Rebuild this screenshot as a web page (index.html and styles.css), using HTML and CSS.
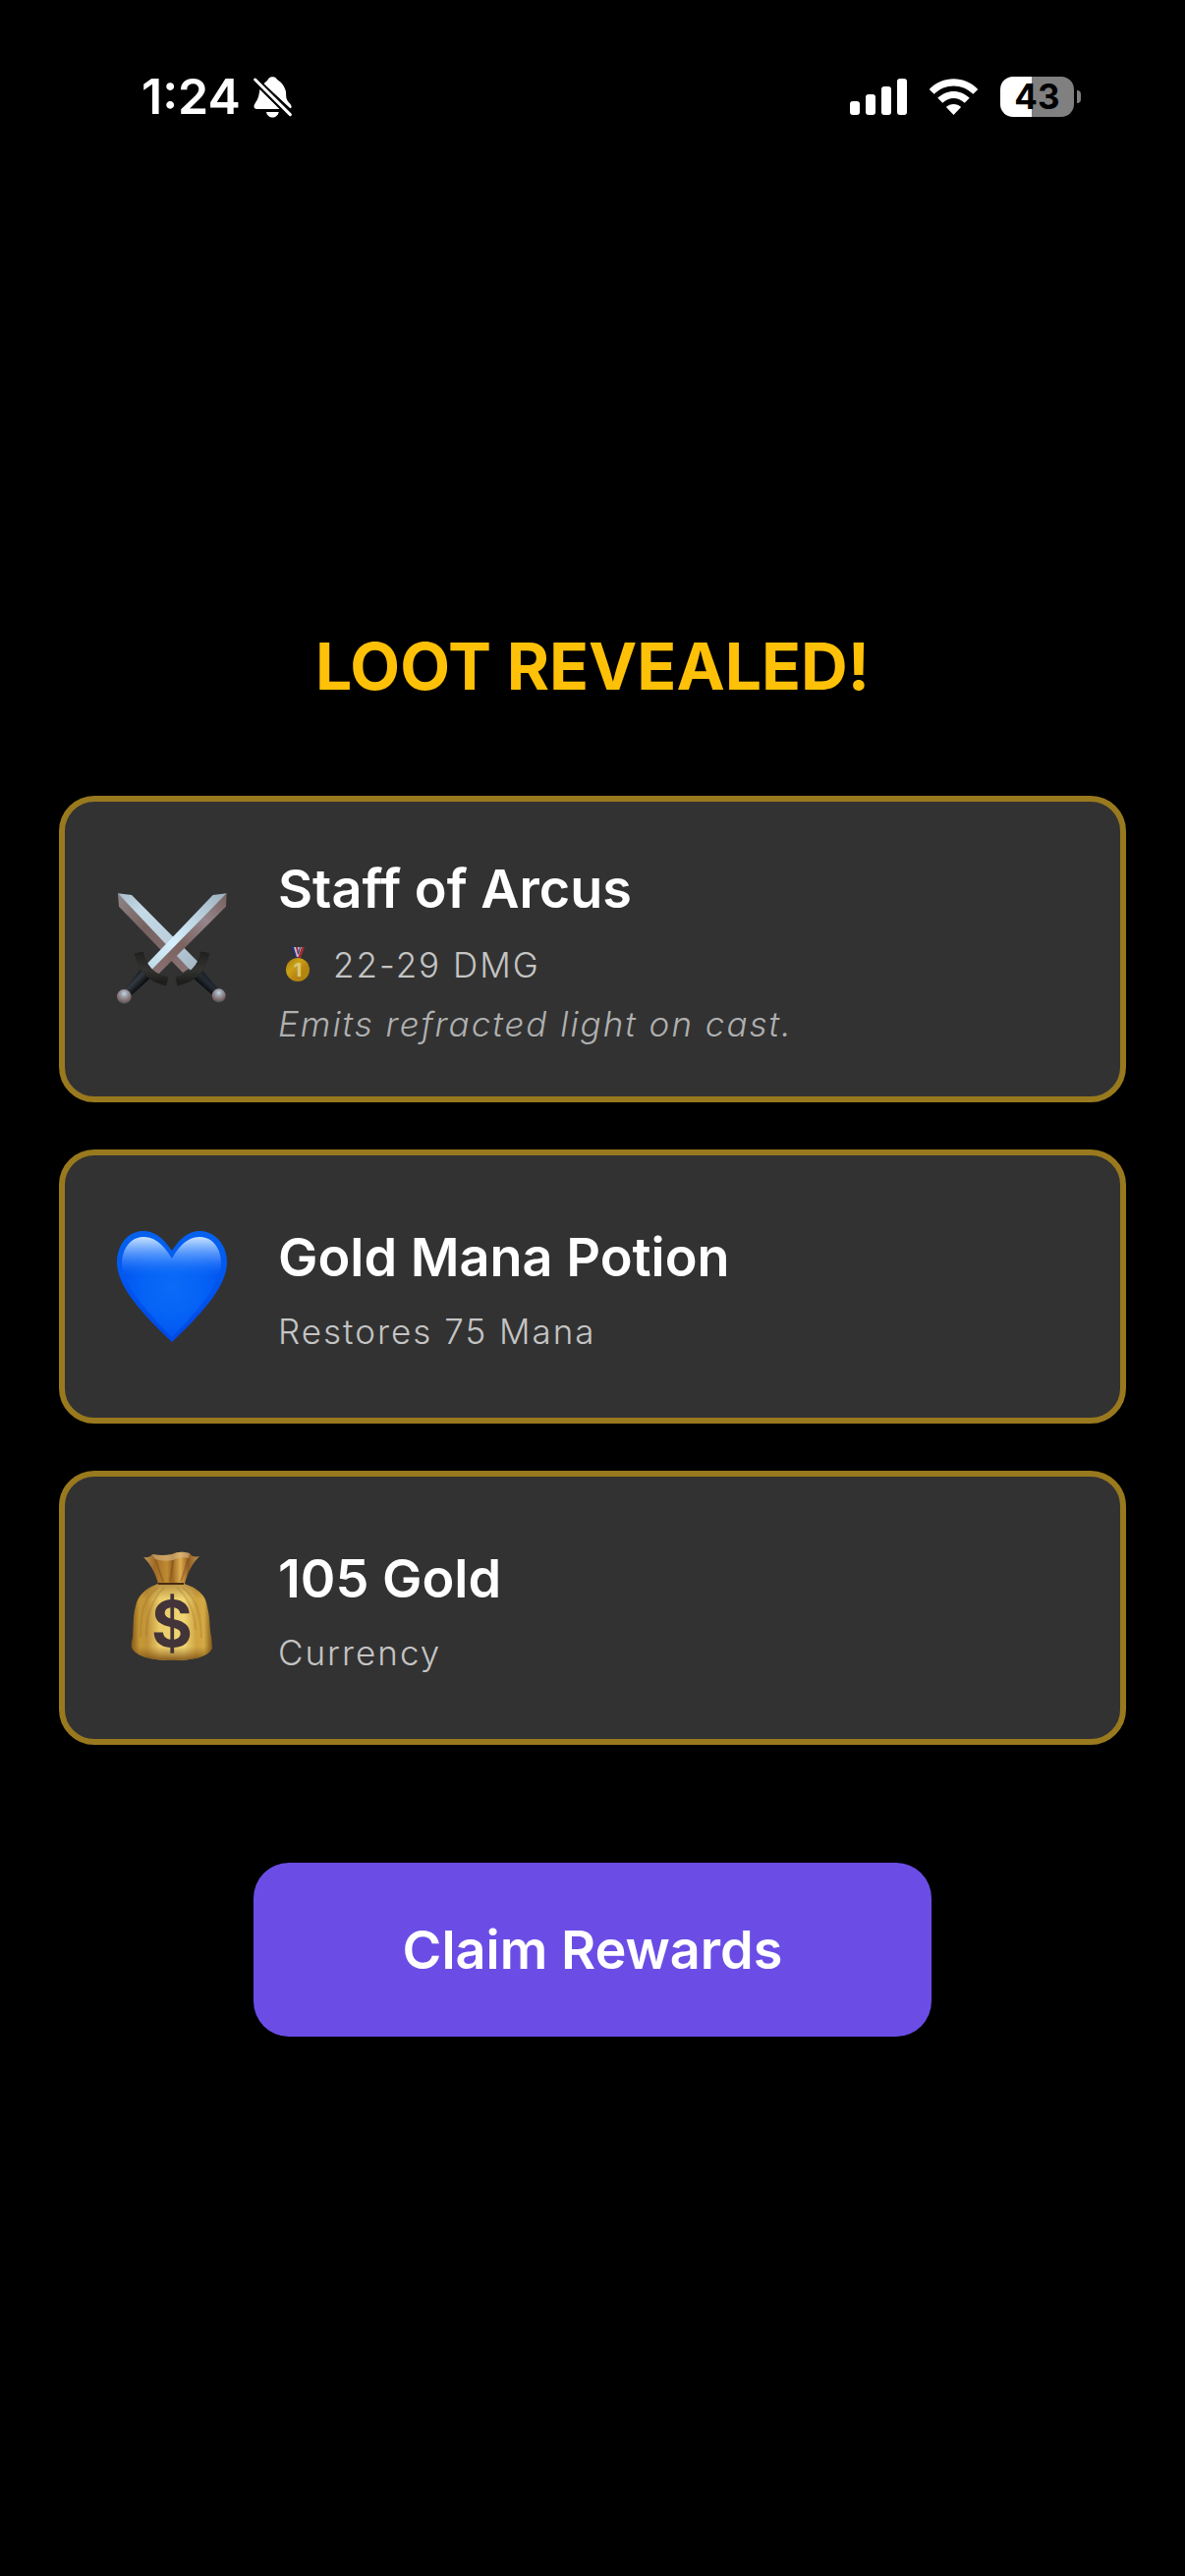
FILE: index.html
```html
<!DOCTYPE html>
<html lang="en">
<head>
<meta charset="utf-8">
<meta name="viewport" content="width=device-width, initial-scale=1">
<title>Loot Revealed</title>
<link rel="stylesheet" href="styles.css">
</head>
<body>
<header class="status">
  <div class="status-left">
    <span class="time">1:24</span>
    <svg class="bell" viewBox="0 0 117 129" aria-label="Silent mode">
      <path fill="#fff" d="M31 25C38 17 44 15 46 9C49 2 67 2 70 9C73 15 91 20 98 45C102 62 95 68 110 84C117 92 118 98 112 100L28 22Z"/>
      <path fill="#fff" d="M19 42C16 66 13 72 5 84C-2 94 2 102 10 102H80Z"/>
      <path fill="#fff" d="M39 111H77C74 133 42 133 39 111Z"/>
      <path stroke="#000" stroke-width="20" d="M5 12L111 118"/>
      <path stroke="#fff" stroke-width="9" stroke-linecap="round" d="M5 12L112 119"/>
    </svg>
  </div>
  <div class="status-right">
    <svg class="signal" viewBox="0 0 58 37" aria-label="Signal" fill="#fff">
      <rect x="0" y="23" width="10" height="14" rx="3"/>
      <rect x="16" y="16" width="10" height="21" rx="3"/>
      <rect x="32" y="8" width="10" height="29" rx="3"/>
      <rect x="48" y="0" width="10" height="37" rx="3"/>
    </svg>
    <svg class="wifi" viewBox="0 0 152 112" aria-label="Wi-Fi" fill="#fff">
      <path d="M1 33C40-10 112-10 151 33L136 48C103 14 49 14 16 48Z"/>
      <path d="M27 60C54 32 98 32 125 60L110 75C90 56 62 56 42 75Z"/>
      <path d="M53 88C65 76 87 76 99 88L76 112Z"/>
    </svg>
    <div class="battery" aria-label="Battery">43</div>
  </div>
</header>

<main class="loot">
  <h1 class="title">LOOT REVEALED!</h1>
  <ul class="cards">
    <li class="card">
      <svg class="icon" viewBox="0 6 408 408" aria-hidden="true">
        <defs>
          <linearGradient id="steel" x1="0" y1="0" x2="1" y2="1"><stop offset="0" stop-color="#a9bdca"/><stop offset=".25" stop-color="#c4dae8"/><stop offset=".6" stop-color="#bcd0dd"/><stop offset="1" stop-color="#a3b4c2"/></linearGradient>
          <linearGradient id="steelFront" x1="1" y1="0" x2="0" y2="1"><stop offset="0" stop-color="#9eafbd"/><stop offset=".35" stop-color="#bdd3e1"/><stop offset=".65" stop-color="#d6effc"/><stop offset="1" stop-color="#bed6e4"/></linearGradient>
          <linearGradient id="shade" x1="0" y1="0" x2="1" y2="1"><stop offset="0" stop-color="#8e8587"/><stop offset=".4" stop-color="#75625f"/><stop offset="1" stop-color="#8a7375"/></linearGradient>
          <linearGradient id="shadeFront" x1="1" y1="0" x2="0" y2="1"><stop offset="0" stop-color="#76605f"/><stop offset=".3" stop-color="#94858a"/><stop offset=".6" stop-color="#7b6361"/><stop offset="1" stop-color="#8b7374"/></linearGradient>
          <linearGradient id="gripL" gradientUnits="userSpaceOnUse" x1="84" y1="296" x2="112" y2="324"><stop offset="0" stop-color="#15181c"/><stop offset=".4" stop-color="#343a41"/><stop offset="1" stop-color="#0b0e12"/></linearGradient>
          <linearGradient id="gripR" gradientUnits="userSpaceOnUse" x1="326" y1="296" x2="300" y2="324"><stop offset="0" stop-color="#171c22"/><stop offset=".5" stop-color="#252c34"/><stop offset="1" stop-color="#0b0e12"/></linearGradient>
          <linearGradient id="guard" x1="0" y1="0" x2="0" y2="1"><stop offset="0" stop-color="#20201f"/><stop offset=".6" stop-color="#333331"/><stop offset="1" stop-color="#1e1e1d"/></linearGradient>
          <radialGradient id="pommel" cx=".5" cy=".3" r=".7"><stop offset="0" stop-color="#c0d3e2"/><stop offset=".35" stop-color="#9a9ba5"/><stop offset=".75" stop-color="#7d6868"/><stop offset="1" stop-color="#46505a"/></radialGradient>
        </defs>
        <path fill="url(#shade)" d="M42 40L45 80L240 282L272 262Z"/>
        <path fill="url(#steel)" d="M42 40L84 45L290 253L264 275Z"/>
        <path fill="url(#gripR)" d="M262 290L294 268L352 336L334 354Z"/>
        <path fill="none" stroke="url(#guard)" stroke-width="28" d="M308 220Q296 294 220 309"/>
        <circle cx="350" cy="352" r="21" fill="url(#pommel)"/>
        <path fill="url(#shadeFront)" d="M374 40L372 80L162 290L136 268Z"/>
        <path fill="url(#steelFront)" d="M332 45L374 40L142 276L126 260Z"/>
        <path fill="url(#gripL)" d="M112 270L146 294L78 356L60 336Z"/>
        <path fill="none" stroke="url(#guard)" stroke-width="28" d="M106 220Q120 294 193 309"/>
        <circle cx="61" cy="355" r="22" fill="url(#pommel)"/>
      </svg>
      <div class="info">
        <h2 class="name">Staff of Arcus</h2>
        <p class="detail stat">
          <svg class="medal" viewBox="0 0 40 40" aria-hidden="true">
            <defs><linearGradient id="coin" x1="0" y1="0" x2="1" y2="1"><stop offset="0" stop-color="#a9770f"/><stop offset=".35" stop-color="#c9a214"/><stop offset=".6" stop-color="#b98410"/><stop offset="1" stop-color="#a8870e"/></linearGradient></defs>
            <path fill="#292c78" d="M13 2H18L22 13H18Z"/><path fill="#c4c4cb" d="M16 2H25L21 12H19Z"/><path fill="#a32d35" d="M18 2H20L21 8L20 10ZM24 2H27L23 13H20Z"/><path fill="#292c78" d="M22 2H23L21 9H20Z"/>
            <circle cx="20" cy="25" r="12" fill="url(#coin)"/>
            <text x="20" y="32" text-anchor="middle" class="rank">1</text>
          </svg>
          <span>22-29 DMG</span>
        </p>
        <p class="detail flavor">Emits refracted light on cast.</p>
      </div>
    </li>
    <li class="card">
      <svg class="icon" viewBox="0 0 136 136" aria-hidden="true">
        <defs>
          <linearGradient id="heartRim" x1="0" y1="0" x2="0" y2="1"><stop offset="0" stop-color="#0562ee"/><stop offset=".4" stop-color="#0057f0"/><stop offset="1" stop-color="#0049e6"/></linearGradient>
          <radialGradient id="heartFill" gradientUnits="userSpaceOnUse" cx="69" cy="68" r="58"><stop offset="0" stop-color="#0b6cf7"/><stop offset=".55" stop-color="#0562f6"/><stop offset="1" stop-color="#0052ee"/></radialGradient>
          <linearGradient id="heartGloss" x1="0" y1="0" x2="0" y2="1"><stop offset="0" stop-color="#c9e4ff"/><stop offset=".12" stop-color="#9cc7ff" stop-opacity=".9"/><stop offset=".32" stop-color="#5b9cff" stop-opacity=".65"/><stop offset=".6" stop-color="#1a72fa" stop-opacity="0"/></linearGradient>
        </defs>
        <path fill="url(#heartRim)" d="M69 31C60 18 51 11 40 11C24 11 13 25 13 43C13 66 36 93 69 124C102 93 125 66 125 43C125 25 113 11 97 11C87 11 77 18 69 31Z"/>
        <path fill="url(#heartFill)" d="M69 39C60 24 51 17 40 17C27 17 18 29 18 44C18 64 40 90 69 119C98 90 119 64 119 44C119 29 111 17 97 17C87 17 77 24 69 39Z"/>
        <path fill="url(#heartGloss)" d="M69 39C60 24 51 17 40 17C27 17 18 29 18 44C18 57 26 71 38 84C58 72 80 72 99 84C111 71 119 57 119 44C119 29 111 17 97 17C87 17 77 24 69 39Z"/>
      </svg>
      <div class="info">
        <h2 class="name">Gold Mana Potion</h2>
        <p class="detail">Restores 75 Mana</p>
      </div>
    </li>
    <li class="card">
      <svg class="icon" viewBox="0 0 136 136" aria-hidden="true">
        <defs>
          <linearGradient id="sack" x1="0" y1="0" x2="1" y2="0"><stop offset="0" stop-color="#84591b"/><stop offset=".1" stop-color="#c49735"/><stop offset=".2" stop-color="#c0933a"/><stop offset=".35" stop-color="#ebcc69"/><stop offset=".65" stop-color="#f0d675"/><stop offset=".8" stop-color="#cfa441"/><stop offset=".9" stop-color="#d3aa44"/><stop offset="1" stop-color="#80571b"/></linearGradient>
          <linearGradient id="sackBase" x1="0" y1="0" x2="0" y2="1"><stop offset="0" stop-color="#8b5c1c" stop-opacity=".55"/><stop offset=".2" stop-color="#8b5c1c" stop-opacity="0"/><stop offset=".82" stop-color="#8b5c1c" stop-opacity="0"/><stop offset="1" stop-color="#74450f" stop-opacity=".85"/></linearGradient>
          <linearGradient id="ruffle" x1="0" y1="0" x2="1" y2="0"><stop offset="0" stop-color="#c19760"/><stop offset=".2" stop-color="#a06b25"/><stop offset=".42" stop-color="#c08b31"/><stop offset=".52" stop-color="#9d6924"/><stop offset=".66" stop-color="#dfac4f"/><stop offset=".8" stop-color="#935d20"/><stop offset="1" stop-color="#bd9256"/></linearGradient>
        </defs>
        <path fill="url(#ruffle)" d="M40 16Q46 17 49 13Q60 15 69 13Q77 9 87 12Q90 17 97 15C88 24 85 33 82 43H55C52 32 48 24 40 16Z"/>
        <path fill="#d8b98c" fill-opacity=".55" d="M49 13Q60 15 69 13Q77 9 87 12L86 17Q77 15 70 19Q60 21 52 18Z"/>
        <path fill="none" stroke="#744718" stroke-opacity=".4" stroke-width="2" d="M52 18L60 41M70 19L67 41M86 17L78 41"/>
        <path fill="url(#sack)" d="M55 43H81C94 47 104 54 105 67C108 77 107 87 109 97Q110 103 110 109C105 118 90 121 69 121C48 121 32 117 28 108Q27 104 29 98C30 85 29 76 32 66C34 54 44 47 55 43Z"/>
        <path fill="none" stroke="#936621" stroke-opacity=".25" stroke-width="2" d="M55 47C40 57 37 72 37 97M61 47C47 60 43 77 43 97M80 47C94 58 98 72 99 98M74 47C87 58 92 74 93 90"/>
        <path fill="url(#sackBase)" d="M55 43H81C94 47 104 54 105 67C108 77 107 87 109 97Q110 103 110 109C105 118 90 121 69 121C48 121 32 117 28 108Q27 104 29 98C30 85 29 76 32 66C34 54 44 47 55 43Z"/>
        <path stroke="#4a2b12" stroke-width="2" d="M55 43H81"/>
        <text x="69" y="107" text-anchor="middle" class="dollar">$</text>
      </svg>
      <div class="info">
        <h2 class="name">105 Gold</h2>
        <p class="detail">Currency</p>
      </div>
    </li>
  </ul>
  <button class="claim" type="button">Claim Rewards</button>
</main>
</body>
</html>
```
FILE: styles.css
```css
* {
  box-sizing: border-box;
}

body {
  margin: 0;
  min-height: 100vh;
  display: flex;
  flex-direction: column;
  background: #000;
  color: #fff;
  font-family: Inter, "Liberation Sans", sans-serif;
}

h1, h2, p, ul {
  margin: 0;
  padding: 0;
}

.status {
  display: flex;
  justify-content: space-between;
  padding: 68px 106px 49px 144px;
}

.status-left,
.status-right {
  display: flex;
  align-items: center;
  height: 60px;
}

.status-left {
  gap: 13px;
}

.status-right {
  gap: 22px;
}

.time {
  font-size: 50px;
  font-weight: 600;
  line-height: 60px;
}

.bell {
  width: 39px;
  height: 43px;
}

.signal {
  width: 58px;
  height: 37px;
}

.wifi {
  width: 51px;
  height: 37px;
}

.battery {
  position: relative;
  width: 75px;
  height: 41px;
  margin-right: 7px;
  border-radius: 13px;
  background: linear-gradient(to right, #fff 43%, #808080 43%);
  color: #000;
  font-size: 35px;
  font-weight: 700;
  line-height: 41px;
  text-align: center;
}

.battery::after {
  content: "";
  position: absolute;
  left: 78px;
  top: 14px;
  width: 4px;
  height: 13px;
  border-radius: 0 4px 4px 0;
  background: #808080;
}

.loot {
  flex: 1;
  display: flex;
  flex-direction: column;
  align-items: center;
  justify-content: center;
  padding: 0 60px 90px;
}

.title {
  margin-bottom: 90px;
  color: #ffc107;
  font-size: 66px;
  font-weight: 700;
  line-height: 84px;
}

.cards {
  align-self: stretch;
  display: flex;
  flex-direction: column;
  gap: 48px;
  list-style: none;
}

.card {
  display: flex;
  align-items: center;
  gap: 41px;
  min-height: 279px;
  padding: 47px 40px;
  border: 6px solid #99791e;
  border-radius: 36px;
  background: #323232;
}

.icon {
  flex: none;
  width: 136px;
  height: 136px;
}

.info {
  display: flex;
  flex-direction: column;
  gap: 6px;
}

.name {
  font-size: 54px;
  font-weight: 600;
  line-height: 84px;
}

.detail {
  color: #c4c4c4;
  font-size: 35px;
  font-weight: 300;
  line-height: 54px;
  letter-spacing: 2px;
}

.stat {
  display: flex;
  align-items: center;
  gap: 16px;
  padding-top: 2px;
}

.flavor {
  color: #b0b0b0;
  font-style: italic;
}

.medal {
  width: 40px;
  height: 40px;
}

.rank {
  fill: #dac777;
  font-size: 19px;
  font-weight: 800;
  letter-spacing: 0;
}

.dollar {
  fill: #423438;
  font-size: 64px;
  font-weight: 700;
}

.claim {
  margin-top: 120px;
  padding: 48px 152px;
  border: 0;
  border-radius: 36px;
  background: #6b4de6;
  color: #fff;
  font-family: inherit;
  font-size: 54px;
  font-weight: 600;
  line-height: 81px;
}
```
